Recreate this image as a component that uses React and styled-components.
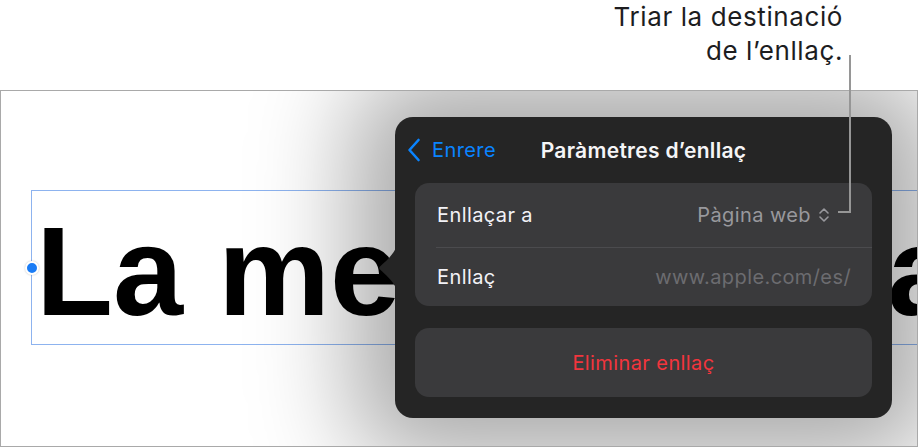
import styled, { createGlobalStyle } from "styled-components";

const GlobalStyle = createGlobalStyle`
  html, body {
    margin: 0;
    padding: 0;
    background: #ffffff;
    font-family: Inter, "Liberation Sans", sans-serif;
  }
`;

const Page = styled.div`
  position: relative;
  width: 918px;
  height: 447px;
  overflow: hidden;
  background: #ffffff;
`;

const CalloutArea = styled.div`
  height: 90px;
  display: flex;
  justify-content: flex-end;
  padding-right: 75px;
  box-sizing: border-box;
`;

const CalloutText = styled.p`
  margin: 0;
  font-size: 26px;
  line-height: 34px;
  text-align: right;
  color: #1d1d1f;
  letter-spacing: 0.6px;
`;

const LeaderLine = styled.svg`
  position: absolute;
  left: 836px;
  top: 52px;
  z-index: 5;
`;

const Canvas = styled.div`
  position: relative;
  width: 918px;
  height: 357px;
  box-sizing: border-box;
  border: 1px solid #a9a9a9;
  overflow: hidden;
  padding-top: 99px;
  padding-left: 30px;
`;

const TextBox = styled.div`
  position: relative;
  width: 1000px;
  height: 155px;
  box-sizing: border-box;
  border: 1px solid #8db3ef;
  padding: 10px 0 0 4px;
  font-family: "Liberation Sans", Arial, sans-serif;
  font-weight: 700;
  font-size: 126px;
  line-height: 141px;
  white-space: nowrap;
  color: #000;
`;

const Tracked = styled.span`
  letter-spacing: ${(p) => p.$spacing}px;
`;

const Handle = styled.span`
  position: absolute;
  left: -7px;
  top: 50%;
  width: 10px;
  height: 10px;
  margin-top: -7px;
  border-radius: 50%;
  background: #1a7cf5;
  border: 2px solid #ffffff;
  box-shadow: 0 0 2px rgba(0, 0, 0, 0.25);
`;

const Popover = styled.div`
  position: absolute;
  left: 394px;
  top: 26px;
  width: 497px;
  height: 301px;
  box-sizing: border-box;
  border-radius: 18px;
  background: #252525;
  box-shadow: 0 0 100px 42px rgba(0, 0, 0, 0.34);
  padding: 0 20px 21px;
  display: flex;
  flex-direction: column;
  letter-spacing: 0.4px;
`;

const Arrow = styled.svg`
  position: absolute;
  left: -17px;
  top: 131px;
`;

const Header = styled.div`
  height: 66px;
  display: grid;
  grid-template-columns: 1fr auto 1fr;
  align-items: center;
  margin: 0 -20px;
  padding: 0 12px;
`;

const BackButton = styled.div`
  display: flex;
  align-items: center;
  gap: 11px;
  color: #0a84ff;
  font-size: 20px;
`;

const Title = styled.div`
  color: #f5f5f7;
  font-size: 21px;
  font-weight: 600;
  letter-spacing: 0.3px;
`;

const Body = styled.div`
  display: flex;
  flex-direction: column;
  gap: 22px;
`;

const Card = styled.div`
  background: #3a3a3c;
  border-radius: 14px;
  overflow: hidden;
`;

const Row = styled.div`
  height: ${(p) => p.$height}px;
  display: flex;
  align-items: center;
  justify-content: space-between;
  padding: 0 21px 0 22px;
  font-size: 20px;
`;

const Separator = styled.div`
  height: 1px;
  margin-left: 21px;
  background: #4b4b4e;
`;

const Label = styled.span`
  color: #f2f2f7;
`;

const Value = styled.span`
  display: flex;
  align-items: center;
  gap: 7px;
  color: ${(p) => p.$color};
  margin-right: ${(p) => p.$inset || 0}px;
`;

const DeleteButton = styled.div`
  height: 69px;
  display: flex;
  align-items: center;
  justify-content: center;
  background: #3a3a3c;
  border-radius: 14px;
  color: #f2353d;
  font-size: 20px;
`;

const App = () => {
  return (
    <Page>
      <GlobalStyle />
      <CalloutArea>
        <CalloutText>
          Triar la destinació
          <br />
          de l’enllaç.
        </CalloutText>
      </CalloutArea>
      <LeaderLine width="18" height="164" viewBox="0 0 18 164">
        <path d="M14 3 V160 H2" fill="none" stroke="#969696" strokeWidth="2" />
      </LeaderLine>
      <Canvas>
        <TextBox>
          <Handle />
          La me<Tracked $spacing={-3}>va pàgin</Tracked>a
        </TextBox>
        <Popover>
          <Arrow width="18" height="40" viewBox="0 0 18 40">
            <path
              d="M18 0 C14 8 7 14 2 18.5 Q0.5 20 2 21.5 C7 26 14 32 18 40 Z"
              fill="#252525"
            />
          </Arrow>
          <Header>
            <BackButton>
              <svg width="14" height="24" viewBox="0 0 14 24">
                <path
                  d="M11.5 2 L2.5 12 L11.5 22"
                  fill="none"
                  stroke="#0a84ff"
                  strokeWidth="2.6"
                  strokeLinecap="round"
                  strokeLinejoin="round"
                />
              </svg>
              Enrere
            </BackButton>
            <Title>Paràmetres d’enllaç</Title>
            <span />
          </Header>
          <Body>
            <Card>
              <Row $height={64}>
                <Label>Enllaçar a</Label>
                <Value $color="#98989d" $inset={21}>
                  Pàgina web
                  <svg width="12" height="16" viewBox="0 0 12 16">
                    <path
                      d="M2 6 L6 2 L10 6 M2 10 L6 14 L10 10"
                      fill="none"
                      stroke="#98989d"
                      strokeWidth="1.6"
                      strokeLinecap="round"
                      strokeLinejoin="round"
                    />
                  </svg>
                </Value>
              </Row>
              <Separator />
              <Row $height={58}>
                <Label>Enllaç</Label>
                <Value $color="#6c6c70">www.apple.com/es/</Value>
              </Row>
            </Card>
            <DeleteButton>Eliminar enllaç</DeleteButton>
          </Body>
        </Popover>
      </Canvas>
    </Page>
  );
};

export default App;
